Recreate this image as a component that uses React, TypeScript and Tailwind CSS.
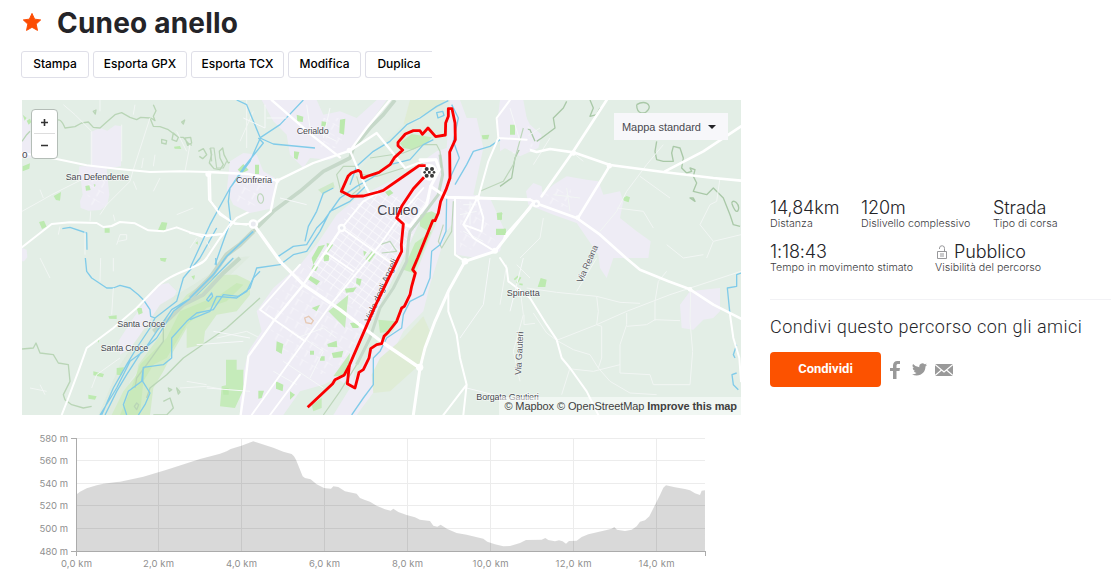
import type { ReactNode } from 'react';

const ACTIONS = [
  { label: 'Stampa', width: 'w-[68px]' },
  { label: 'Esporta GPX', width: 'w-[94px]' },
  { label: 'Esporta TCX', width: 'w-[93px]' },
  { label: 'Modifica', width: 'w-[73px]' },
];

const ELEVATIONS = [
  { label: '580 m', y: 13.5 },
  { label: '560 m', y: 35.5 },
  { label: '540 m', y: 58.5 },
  { label: '520 m', y: 80.5 },
  { label: '500 m', y: 103.5 },
  { label: '480 m', y: 126.5 },
];

const DISTANCES = [
  { label: '0,0 km', x: 56.5 },
  { label: '2,0 km', x: 138.5 },
  { label: '4,0 km', x: 221.5 },
  { label: '6,0 km', x: 304.5 },
  { label: '8,0 km', x: 387.5 },
  { label: '10,0 km', x: 470.5 },
  { label: '12,0 km', x: 553.5 },
  { label: '14,0 km', x: 636.5 },
];

const PROFILE =
  'M170 379V208L180 200 200 190 230 181 250 176 290 171 300 170 370 155 440 134 540 102 600 86 620 79 632 72 664 62 700 49 760 68 790 80 815 87 822 94 828 104 848 154 855 159 872 163 890 178 912 189 933 191 940 184 955 186 975 199 1010 206 1020 219 1035 225 1050 230 1070 242 1095 253 1112 257 1120 251 1135 261 1160 270 1185 277 1200 284 1230 288 1240 302 1252 305 1262 299 1282 312 1310 324 1340 329 1390 341 1402 350 1425 358 1450 364 1470 363 1500 354 1518 345 1565 344 1576 339 1585 345 1605 349 1617 346 1628 349 1638 356 1647 348 1670 347 1685 336 1705 328 1760 315 1775 311 1783 306 1791 314 1815 318 1835 314 1850 304 1860 290 1875 286 1888 274 1905 240 1920 210 1930 188 1938 181 1965 187 1995 192 2010 196 2025 205 2040 210 2045 197 2055 196V379Z';

function Countryside() {
  return (
    <>
      <rect x="0" y="0" width="2170" height="960" fill="#e3eee6" />

      {/* Built-up areas */}
      <g fill="#eeecf5">
        <path d="M212 102L240 90 262 98 285 82 305 85 303 205 260 212 268 290 262 320 242 336 205 338 182 330 180 310 188 290 183 250 175 235 178 205 212 205Z" />
        <path d="M6 50L30 70 34 180 6 180ZM6 450L20 455 22 478 12 490 6 490Z" />
        <path d="M1440 60L1465 20 1500 20 1530 80 1565 110 1555 150 1500 175 1455 150 1440 160ZM1518 280L1540 255 1565 265 1568 290 1600 260 1640 235 1700 245 1735 250 1750 290 1800 280 1810 310 1800 360 1850 400 1892 430 1885 480H1780L1760 540 1740 510 1735 470 1670 375 1600 350 1525 320Z" />
        <path d="M1980 620L2010 580 2050 575 2100 570 2100 640 2080 660 2050 665 2020 695 1985 690Z" />
        <path d="M390 590L420 560 445 555 470 580 450 620 410 660 370 700 330 750 300 770 295 730 340 660Z" />
      </g>
      <path d="M200 250L255 245 250 320 205 325ZM1440 60L1520 60 1540 150 1470 170ZM1560 280L1650 260 1660 330 1580 320Z" fill="url(#lanes)" opacity=".5" />

      {/* Woods and parks */}
      <path d="M640 480L690 475 600 560 520 600 440 700 400 760 330 850 290 951H235L300 800 420 620 520 560Z" fill="#dbeadb" opacity=".7" />
      <path d="M500 590L590 530 650 530 690 550 690 590 650 640 590 650 555 700 550 740 500 750 500 690 460 760 430 820 400 870 390 951H275L310 880 350 830 355 800 430 700 460 640Z" fill="#d3ebc9" />
      <path d="M600 590L650 555 670 560 620 610 560 630 500 680 440 780 400 800 370 850 360 951H300L330 880 360 800 440 720 480 640Z" fill="#c9e9ba" />
      <g fill="#bdeab0">
        <path d="M101 294L123 282 120 308 108 306ZM57 372L72 368 80 386 66 393ZM413 398L425 372 442 374 436 398ZM254 391H269V404H254ZM462 146L480 144 484 153 464 152ZM8 50L20 60 14 68ZM20 68L30 62 34 72 26 80ZM8 205L30 196 28 212 8 220ZM196 264L208 262 212 276 198 278ZM221 258L227 260 224 268ZM526 435L533 430 534 440Z" />
        <path d="M1470 80H1486L1484 111H1467ZM1440 392H1458V408L1440 413ZM1440 345L1448 346 1440 368ZM1809 300L1820 294 1830 298 1826 313 1812 308ZM1553 567L1562 540 1580 545 1576 567Z" />
        <path d="M220 820L252 828 248 838 220 832ZM290 810L312 808 305 832 290 830ZM350 630L365 630 368 645 356 650ZM265 655L290 652 290 663 268 662ZM205 890L230 895 225 905 205 902ZM420 480H440L436 492 422 488ZM514 535L525 532 522 546ZM230 724L238 726 236 734Z" />
      </g>
      <path d="M1483 545L1495 534M1490 556L1502 538M1498 558L1508 560" stroke="#bdeab0" strokeWidth="5" fill="none" />

      {/* Contours */}
      <g fill="none" stroke="#b9d5b6" strokeWidth="4" strokeLinejoin="round">
        <path d="M6 130L20 110 30 100M113 66C125 62 130 80 135 90L165 86 185 75 205 72 220 88 240 90 260 72 285 50 305 44 330 58 350 65 362 58 390 60 400 85 420 86 445 95 475 118 490 118 505 136 515 142M400 20L408 38 400 55 405 68 393 60M425 124L440 128 438 138 425 135ZM460 105L475 118 470 130 456 125ZM495 120L512 118 515 135 503 142ZM535 160L550 152 560 170 548 182 538 175M570 150L575 170 568 195 582 212 600 215 610 200 600 180 598 160 608 150 612 170 625 195 650 185M220 40L228 36 226 48ZM485 72L494 66 490 78Z" />
        <path d="M1640 10L1630 30 1600 60 1605 90 1565 120 1550 130M1545 130L1530 95 1510 92 1500 150 1485 180 1475 240 1440 265M1710 6L1720 30 1710 55 1730 50 1740 30M1850 20C1875 5 1895 20 1885 35S1850 50 1850 20M1910 130L1905 160 1910 185 1930 190 1960 190 1955 165 1960 145 1980 150 1990 180 1985 210 2000 225 2015 220 2010 210 2025 215 2020 235 2030 255 2020 280 2060 290 2080 270 2110 300 2130 350 2140 380 2160 385M2010 300L2025 310 2020 300ZM2135 315C2140 300 2160 320 2155 335S2140 330 2135 315" stroke="#a9c8a7" />
        <path d="M6 753L40 750 48 735 60 765 100 770 115 795 145 800 150 850 130 890 135 905 155 920 190 930 215 925M430 680L430 730 380 800 350 840 345 870M720 600L620 690 490 780 440 830 390 870 380 900M430 910L450 900 460 930 440 951 400 951M445 870L455 875 448 880ZM470 870L480 882 475 888ZM350 915L356 920 350 935 343 925Z" />
      </g>
      <path d="M660 480L610 525 550 590 490 620 450 660 400 700" fill="none" stroke="#c4d8c7" strokeWidth="12" />

      {/* Rivers and canals */}
      <g fill="none" stroke="#80cbe9" strokeWidth="4" strokeLinejoin="round">
        <path d="M590 390L540 480 490 540 470 610 405 660 390 690 350 750 320 800 280 870 245 951M587 480L590 510 540 580 460 640 410 720 365 760 320 830 290 880 255 951M640 480L590 530 530 590 455 635 410 700 370 760 330 790 290 870 240 951" />
        <path d="M127 392L150 388 200 405 201 455M196 480L200 520 215 540 260 570 280 570 300 562 330 570 355 590 370 605 390 635 392 655 405 660" />
        <path d="M720 520L700 540 680 580 655 595 610 590 580 635 530 645 500 670 455 720 455 780 430 800 370 808 365 850 325 880 310 920 320 951M370 808L368 850 390 885 375 920 355 951M560 605L575 585 578 595 565 610Z" />
        <path d="M2163 525L2150 530V565L2122 570 2130 650M2150 740L2140 770 2145 780M2150 825L2136 830 2140 860 2155 875" />
      </g>

      {/* Minor roads */}
      <g fill="none" stroke="#f2f6f4" strokeWidth="3" strokeLinejoin="round">
        <path d="M6 340L60 310 95 290 185 245M215 100V205M305 80V190M390 60L340 215 330 250 260 320 240 350M130 20L165 50 215 100M212 340L210 370M120 385L115 410M195 400V470M60 275L70 300M280 350L285 370M290 440L300 410 320 410V425L295 430M370 180L365 210M405 170L400 205M510 140L495 220M420 240L400 280M470 100L500 160M520 330L470 350M340 250L350 275M680 6V150M700 40L660 130M240 6V40M345 20L340 50M280 480V520M60 480L90 540M242 480L240 550M280 570L275 650M300 780L230 830 215 870M30 870L80 880M60 860L75 890M500 850L560 860M590 720L680 700 720 720M480 870L560 865 640 880M530 420L510 450M560 430L570 450" />
        <path d="M1460 20L1490 80 1530 90M1560 90L1500 130M1590 120L1540 200M1660 165L1690 190M1880 200L1820 280 1790 340 1740 400M1860 235L1950 300M1930 140L1880 200M1790 330L1870 340 1900 390M2100 240L2090 310 2070 320 2040 380 2080 430 2060 480M1940 440L1990 480 2050 470M2080 430L2163 410M1570 360L1560 420 1500 480M1600 290L1680 300M1640 270L1650 340" />
        <path d="M1520 570L1610 583 1730 595 1800 613 1860 616M1610 727L1730 680 1820 640 1950 590 2163 520M1730 595L1735 640 1730 680 1745 685V780L1735 810M1820 645L1820 680 1800 740V825L1890 830 1900 860H2010L2018 760 2010 670 2012 574M1820 685L1880 680 1905 665 1980 668M1905 668L1905 610 1915 550 1940 520M1610 727L1660 755 1710 770 1735 810 1770 850 1830 885 1910 890M1645 812L1720 820 1800 800M1512 650V680L1545 676M1500 570L1510 650 1480 760 1500 850M1540 645L1580 705 1610 727M1650 810L1625 890M1670 580L1730 480M1460 500L1440 620M1490 500L1530 540" />
      </g>

      {/* Main roads */}
      <g fill="none" stroke="#fff" strokeLinejoin="round" strokeLinecap="round" strokeWidth="6">
        <path d="M6 165L110 183 200 202 290 212 390 222 480 220 565 222M730 320L650 360 600 420 560 480M565 225L567 305 600 345 640 375 680 380M6 448L95 378 150 373 230 375 250 387 275 384 300 372 345 376 385 397 430 400 470 388 545 416 605 408" />
        <path d="M1530 305L1560 320 1670 360 1740 410 1818 480 1860 515 1945 550 2010 574 2080 620 2163 662M1440 120L1490 120 1510 150 1550 162 1590 153 1660 163 1770 201 1930 222 2080 240 2163 248" strokeWidth="8" />
        <path d="M1760 6L1660 160 1565 295M1768 205L1735 260 1675 358M1935 220L2050 160 2163 85M1530 330L1440 430" strokeWidth="8" />
        <path d="M1440 480L1460 510 1465 550 1530 600 1580 680 1610 725 1625 780 1650 810 1700 880 1735 951" />
        <path d="M560 480C545 510 450 520 405 573L350 630 280 690 200 750 175 820 145 900 125 951M2130 650L2140 720 2158 780 2163 850" />
      </g>
    </>
  );
}

function City() {
  return (
    <g transform="translate(510 0)">
      <g fill="#eeecf5">
        <path d="M215 6H380L400 50 450 40 500 60 560 6H590L480 155 420 185 360 180 340 210 300 170 290 110 250 70Z" />
        <path d="M120 190L160 165 200 170 220 220 255 240 250 330 180 345 130 320 110 280Z" />
        <path d="M640 230L740 160 770 150 780 6H810L830 60 860 60 880 150 850 290 900 300 945 400 930 460 860 480 800 470 785 380 770 400 745 480 720 560 700 640 640 700 600 780 560 870 500 951H150V870L175 760 215 700 200 640 250 570 330 500 380 440 440 350 500 300 560 270Z" />
        <path d="M930 6H1000L1010 60 1020 160 940 150 920 90Z" />
      </g>
      <path d="M480 330L560 285 640 300 720 300 640 470 540 650 440 590 350 500 420 440Z" fill="url(#blocks)" opacity=".75" />
      <path d="M220 640L340 510 540 650 470 790 400 830 280 790ZM810 310L870 310 920 440 810 460ZM130 240L230 240 200 330 140 310ZM400 60L470 60 450 150 380 150Z" fill="url(#lanes)" opacity=".5" />

      {/* Parks along the two rivers */}
      <path d="M660 6H765L740 60 700 90 640 80Z" fill="#dfecd5" />
      <path d="M640 80L760 20 770 110 720 130 660 185 550 225 500 230 560 150Z" fill="#e1eee3" />
      <path d="M700 655L640 720 570 780 545 830 550 885 600 880 700 790 720 700Z" fill="#dfecd6" />
      <path d="M690 370L745 360 700 470 660 570 610 700 540 760 490 850 500 760 560 640 640 480Z" fill="#dfeee1" />
      <path d="M400 860L440 840 480 870 430 951H280L330 880Z" fill="#e1eee4" />
      <g fill="#c5ebba">
        <path d="M630 135L665 108 725 118 715 132 670 155 640 150ZM690 350L725 340 745 350 735 370 715 400 690 385ZM675 435L725 400 690 480 670 525 640 515ZM415 640L475 590 465 690ZM430 835L480 765 475 825 465 835ZM565 665L615 670 600 700 570 705ZM365 920L395 900 395 930 370 940ZM108 785H140V815H160V875L135 930 90 925 95 865 108 862Z" />
      </g>
      <g fill="#bbe9ad">
        <path d="M585 282L600 275 610 285 595 295ZM385 445L405 440 370 500 365 480ZM410 435L430 440 412 465ZM400 472L418 468 416 488 402 490ZM355 530L390 550 380 562 352 542ZM370 500L384 506 378 520 364 514ZM465 572L500 568 490 582 468 584ZM545 460L556 468 538 492 526 484ZM500 540L515 544 510 564 498 556ZM520 458L530 462 522 475ZM480 675L510 672 505 690 488 690ZM412 738L440 728 442 748 414 746ZM425 765L460 758 455 778 430 780ZM390 775H404V788H390ZM360 758H372V770H360ZM365 630L390 620 380 640ZM260 730L280 738 275 768 258 758ZM258 850L280 860 278 880 258 872ZM300 880L315 890 300 905ZM205 878H222L215 900 205 902ZM98 870H116V890H100Z" />
        <path d="M395 70L410 72 406 86 394 84ZM450 65L466 62 462 110 448 105ZM312 160L328 162 322 185 312 180ZM320 50L340 56 338 72 322 70ZM960 80H975V110H960ZM920 345L936 343V365L922 366ZM918 392H946V411H918ZM875 112L898 110 894 124 878 124ZM143 215L160 198 176 216 155 226ZM195 200H207V228H195Z" />
      </g>
      <path d="M384 275L430 252 434 268 400 290Z" fill="#cfe9ca" />
      <path d="M344 660L356 655 370 668 364 677 348 674Z" fill="none" stroke="#e6c9b4" strokeWidth="4" />

      <g fill="none" stroke="#c6d8c9" strokeLinejoin="round">
        <path d="M615 6L580 50 540 90 490 150 480 180 400 220 330 280 250 340 190 400" strokeWidth="11" />
        <path d="M190 400L150 440 110 470 60 540 0 600" strokeWidth="14" />
        <path d="M750 170L758 230 745 290 700 350 660 400 655 430 650 490 610 570 570 630 540 720 500 800" strokeWidth="9" />
      </g>
      <g fill="none" stroke="#bdd6bb" strokeWidth="3.5" strokeLinejoin="round">
        <path d="M455 290L440 230 460 205 500 205 520 240M480 295L510 270 500 235M515 230L560 235 640 210 700 195M540 180L640 165 700 140 740 140 750 160 755 210M790 310L785 400 755 450 745 430 760 380M870 280L940 250 970 200 1000 90M205 290C215 280 225 300 218 312S198 305 205 290M65 190L62 150 72 150 80 210 100 210 110 190M500 800L450 880 400 951M570 440L600 430 620 460 575 465" />
      </g>

      <g fill="none" stroke="#80cbe9" strokeWidth="4" strokeLinejoin="round">
        <path d="M340 6L270 80 212 118 180 190 120 270 60 380 0 510M205 120L220 135 160 210 120 270 115 310 122 370 100 430 75 500M210 120L250 138 375 150M140 6L170 20 210 118" />
        <path d="M775 8L740 25 690 60 650 80 600 130 550 160 500 205 480 260M730 125L700 140 660 185 600 200 545 240 500 265 450 300 400 370 380 390 350 440 310 445 265 475M430 270L400 285 380 340 355 385 345 430M530 262L480 310 420 340 390 400 350 460 310 470 270 500 200 510 180 570 140 600 80 595 60 640 0 665" />
        <path d="M785 20L805 60 790 130 808 180 780 240M930 125L900 145 850 160 830 200 795 260M770 300L768 400 750 440 725 460 720 540 700 590 660 610 640 650 635 690 590 720 570 760 550 780 550 860 520 900 485 951M740 44L758 40 762 52 744 60Z" />
        <path d="M190 400L110 475 70 530 0 600" strokeWidth="5" />
      </g>

      <g fill="none" stroke="#f6f8f9" strokeWidth="3" strokeLinejoin="round">
        <path d="M230 60H290M225 20V90L160 60M350 20L360 90 440 130M420 30L400 120M270 300L350 320M960 30L990 130M820 320H860M810 350L860 340M820 400L880 430M840 310V380M900 480L880 620 810 720M1000 480L960 640M830 870L910 890M340 720L400 760 360 840M280 790L400 870M440 720L400 690 320 720M250 820L320 860M50 870L180 880M20 740L160 730M70 700L180 720" />
      </g>

      <g fill="none" stroke="#fff" strokeLinejoin="round" strokeLinecap="round" strokeWidth="5.500">
        <path d="M245 6L370 115 450 178M600 6L530 90 480 158 370 195 262 248 175 228 55 222M262 248L250 300 242 340 205 370M480 158L515 240 540 290M480 158L560 105 645 210M645 210L700 190 738 185" strokeWidth="7" />
        <path d="M190 378L270 490 340 560 450 635 580 735 690 810" strokeWidth="10" />
        <path d="M1030 315L915 460 825 490 775 580 735 670 705 750 690 810 670 951" strokeWidth="9" />
        <path d="M690 185H738L748 215 722 265 710 320 660 385 640 378" strokeWidth="9" />
        <path d="M722 265L770 298 860 300 1020 305" strokeWidth="9" />
        <path d="M455 390L340 560 250 670 175 775 165 860 152 951" strokeWidth="7" />
        <path d="M455 390L520 310 580 275M455 390L610 500M410 465L490 520M345 730L210 635 330 500M185 951L300 790 430 610 570 440 640 340 700 270M240 951L330 830" />
        <path d="M795 300V470L825 490M862 300L880 360 875 400 820 380 862 300M820 380L850 420 915 460M865 298L895 190 925 120 920 60 960 6M925 120L1010 125M775 580V640L800 710 810 780 830 860 760 951M830 860L820 951" strokeWidth="6" />
        <path d="M0 405L50 412 100 408 122 375M60 228L62 310 90 350 135 378H190" />
      </g>
      <g fill="#e9eaf0" stroke="#fff" strokeWidth="7">
        <circle cx="190" cy="378" r="11" />
        <circle cx="455" cy="390" r="9" />
      </g>
    </g>
  );
}

function MapCanvas() {
  return (
    <svg viewBox="6 6 2157 945" className="block h-[315px] w-[719px]">
      <defs>
        <pattern id="blocks" width="26" height="20" patternUnits="userSpaceOnUse" patternTransform="rotate(36)">
          <path d="M0 0H26M0 0V20" stroke="#fff" strokeWidth="4" />
        </pattern>
        <pattern id="lanes" width="34" height="30" patternUnits="userSpaceOnUse" patternTransform="rotate(30)">
          <path d="M0 0H24M6 0V20" stroke="#fff" strokeWidth="3" fill="none" />
        </pattern>
      </defs>

      <Countryside />
      <City />

      {/* Junctions */}
      <circle cx="1549" cy="317" r="8" fill="#e9eaf0" stroke="#fff" strokeWidth="7" />
      <g fill="#fff">
        <circle cx="565" cy="228" r="9" />
        <circle cx="1660" cy="165" r="8" />
        <circle cx="1768" cy="203" r="8" />
        <circle cx="1673" cy="359" r="7" />
        <circle cx="1199" cy="808" r="11" />
        <circle cx="1335" cy="490" r="10" />
        <circle cx="988" cy="157" r="8" />
        <circle cx="1425" cy="458" r="9" />
        <circle cx="1372" cy="300" r="8" />
        <circle cx="2010" cy="574" r="7" />
        <circle cx="772" cy="248" r="7" />
        <circle cx="1228" cy="223" r="25" />
      </g>

      {/* Place names */}
      <g
        fill="#484850"
        stroke="#fff"
        strokeOpacity=".6"
        strokeWidth="4"
        paintOrder="stroke"
        fontFamily='"Liberation Sans", Arial, sans-serif'
        fontSize="27"
      >
        <text x="137" y="247" textLength="190">San Defendente</text>
        <text x="648" y="255" textLength="108">Confreria</text>
        <text x="830" y="107" textLength="96">Cerialdo</text>
        <text x="1072" y="352" fontSize="42" textLength="123">Cuneo</text>
        <text x="292" y="686" textLength="144">Santa Croce</text>
        <text x="242" y="759" textLength="143">Santa Croce</text>
        <text x="1460" y="594" textLength="99">Spinetta</text>
        <text x="1369" y="906" textLength="187">Borgata Gautieri</text>
        <text x="6" y="180" fontSize="30">o</text>
        <g fill="#606068">
          <text transform="translate(1503 831) rotate(-87)" textLength="130">Via Gauteri</text>
          <text transform="translate(1686 556) rotate(-66)" textLength="120">Via Reana</text>
          <text transform="translate(1049 674) rotate(-66)" textLength="204">Viale degli Angeli</text>
        </g>
      </g>

      {/* Recorded route */}
      <g fill="none" stroke="#fa0000" strokeWidth="8.5" strokeLinejoin="round">
        <path d="M1217 203L1197 203 1165 225 1090 277 1075 282 1030 294 993 295 964 280 984 235 994 225 1015 217 1022 222 1025 238 1031 240 1044 234 1077 223 1110 200 1124 178 1148 156 1134 143 1134 133 1156 108 1180 98 1200 98 1207 109 1224 90 1247 116 1276 111 1277 75 1285 55 1285 32 1296 32 1305 75 1306 125 1289 162 1290 240 1278 275 1262 310 1255 345 1245 368 1238 368 1193 480 1178 515 1186 525 1175 565 1170 590 1153 625 1145 630 1130 670 1105 702 1092 715 1085 737 1070 740 1052 752 1047 780 1030 815 1017 823 1005 870 982 857 988 802" />
        <path d="M1212 238L1180 272 1145 325 1130 360 1150 378 1144 440 1145 460 1135 480 1065 625 988 802 972 832 945 845 938 857 863 928" />
      </g>

      {/* Finish marker */}
      <circle cx="1228" cy="223" r="19" fill="#fff" />
      <g fill="#3b3b3b">
        <circle cx="1220" cy="213" r="6" />
        <circle cx="1236" cy="213" r="6" />
        <circle cx="1220" cy="233" r="6" />
        <circle cx="1236" cy="233" r="6" />
        <circle cx="1214" cy="223" r="4" />
        <circle cx="1242" cy="223" r="4" />
        <rect x="1224" y="219" width="8" height="8" />
      </g>
    </svg>
  );
}

function RouteMap() {
  return (
    <div className="relative h-[315px] w-[719px] overflow-hidden">
      <MapCanvas />

      <div className="absolute top-[9px] left-[9px] h-[50px] w-[27px] rounded-[4px] border border-[#b4bdb7] bg-white">
        <svg viewBox="0 0 25 48" className="h-12 w-[25px]">
          <path d="M2 23.5H23" stroke="#ddd" />
          <path d="M9 12.5H16M12.5 9V16M9 35.5H16" stroke="#333" strokeWidth="1.6" />
        </svg>
      </div>

      <div className="absolute top-[13px] right-[13px] flex h-[27px] w-[114px] items-center bg-[#f7f7fa] pt-px pl-[8px] font-['Liberation_Sans',Arial,sans-serif] text-[11px] tracking-[-0.04px] text-[#494950]">
        Mappa standard
        <span className="ml-[7px] border-x-4 border-t-4 border-x-transparent border-t-[#242428]" />
      </div>

      <div className="absolute right-0 bottom-0 h-[18px] bg-white/50 pr-[4px] pl-[5px] font-['Liberation_Sans',Arial,sans-serif] text-[11px] leading-[18px] tracking-[-0.09px] whitespace-nowrap text-[#404040]">
        © Mapbox © OpenStreetMap <b>Improve this map</b>
      </div>
    </div>
  );
}

function ElevationChart() {
  return (
    <svg viewBox="0 0 700 150" className="-ml-0.5 block h-[150px] w-[700px]">
      <g stroke="#ececec" shapeRendering="crispEdges">
        {ELEVATIONS.map((tick) => (
          <path key={tick.label} d={`M56 ${tick.y}H685`} />
        ))}
        {DISTANCES.map((tick) => (
          <path key={tick.label} d={`M${tick.x} 13V126`} />
        ))}
      </g>
      <path d={PROFILE} transform="scale(.33333)" fill="#000" fillOpacity=".15" />
      <path d="M51 13.5H56.5V131M51 126.5H685.5V131" fill="none" stroke="#ababab" shapeRendering="crispEdges" />
      <g fill="#8f8f8f" fontSize="9.5" fontFamily="Inter, sans-serif">
        {ELEVATIONS.map((tick) => (
          <text key={tick.label} x="48" y={tick.y + 3.5} textAnchor="end" textLength="28.5">
            {tick.label}
          </text>
        ))}
        {DISTANCES.map((tick) => (
          <text
            key={tick.label}
            x={tick.x}
            y="142"
            textAnchor="middle"
            textLength={tick.label.length > 6 ? 36 : 31}
          >
            {tick.label}
          </text>
        ))}
      </g>
    </svg>
  );
}

function Stat({ value, label, className }: { value: ReactNode; label: string; className?: string }) {
  return (
    <div className={className}>
      <div className="flex h-[22px] items-center text-[18px] leading-[22px] font-light tracking-[-0.1px] whitespace-nowrap text-[#242428]">
        {value}
      </div>
      <div className="h-[10px] text-[10.7px] leading-[10px] font-light whitespace-nowrap text-[#3c3c42]">{label}</div>
    </div>
  );
}

function LockIcon() {
  return (
    <svg viewBox="0 0 10 14" className="mr-[7px] ml-[2px] h-[14px] w-[10px]" fill="none" stroke="#8c8c90" strokeWidth=".9">
      <path d="M.5 6.5H9.5V13.5H.5ZM7.5 6.5V3.5A2.5 2.5 0 0 0 2.5 3V4M3 9H7M3 11H7" />
    </svg>
  );
}

export default function App() {
  return (
    <div className="h-[583px] w-[1111px] overflow-hidden bg-white font-[Inter,sans-serif]">
      <header className="flex h-[46px] items-center pl-[21px]">
        <svg viewBox="0 0 24 24" className="mt-[-3px] h-[22px] w-[22px]" fill="#fc4c02" stroke="#fc4c02" strokeLinejoin="round">
          <path d="M12 2.6L14.9 8.9 21.5 9.7 16.6 14.3 18 21.2 12 17.8 6 21.2 7.4 14.3 2.5 9.7 9.1 8.9Z" />
        </svg>
        <h1 className="-mt-px ml-[14px] text-[28px] leading-none font-bold tracking-[0.2px] text-[#242428]">Cuneo anello</h1>
      </header>

      <div className="mt-[5px] flex h-[27px] gap-1 pl-[21px] text-[12px] font-medium text-black">
        {ACTIONS.map(({ label, width }) => (
          <button key={label} className={`${width} rounded-[3px] border border-[#dfdfe8] pb-0.5 whitespace-nowrap`}>
            {label}
          </button>
        ))}
        <button className="w-[67px] rounded-l-[3px] border border-r-0 border-[#dfdfe8] pb-0.5">Duplica</button>
      </div>

      <main className="mt-[22px] flex pl-[22px]">
        <div className="w-[719px]">
          <RouteMap />
          <div className="mt-[10px]">
            <ElevationChart />
          </div>
        </div>

        <aside className="ml-[29px] flex-1 pt-[97px]">
          <div className="flex">
            <Stat value="14,84km" label="Distanza" className="w-[91px]" />
            <Stat value="120m" label="Dislivello complessivo" className="w-[132px]" />
            <Stat value="Strada" label="Tipo di corsa" />
          </div>
          <div className="mt-[12px] flex">
            <Stat value="1:18:43" label="Tempo in movimento stimato" className="w-[165px]" />
            <Stat
              value={
                <>
                  <LockIcon />
                  Pubblico
                </>
              }
              label="Visibilità del percorso"
            />
          </div>

          <div className="mt-[26px] border-t border-[#f2f2f5] pt-[16px]">
            <h2 className="font-[Roboto,sans-serif] text-[18px] leading-[22px] font-light tracking-[0.48px] whitespace-nowrap text-[#242428]">
              Condivi questo percorso con gli amici
            </h2>
            <div className="mt-[14px] flex items-center">
              <button className="h-[35px] w-[111px] rounded-[4px] bg-[#fc5200] pb-0.5 font-[Roboto,sans-serif] text-[13px] font-bold text-white">
                Condividi
              </button>
              <svg viewBox="0 0 10 18" className="ml-[9px] h-[18px] w-[10px]" fill="#999">
                <path d="M3 18V10H0V7H3V4.6C3 1.7 4.7 0 7.3 0H10V3H8.2C7 3 6.500 3.600 6.500 4.700V7H10L9.500 10H6.500V18Z" />
              </svg>
              <svg viewBox="0 0 24 20" className="mt-[-1px] ml-[12px] h-[13px] w-[15px]" fill="#999">
                <path d="M24 2.400a9.800 9.800 0 0 1-2.800.8A4.900 4.900 0 0 0 23.300.5a9.900 9.900 0 0 1-3.100 1.200A4.900 4.900 0 0 0 11.800 6.200 14 14 0 0 1 1.700 1a4.900 4.900 0 0 0 1.500 6.600A4.900 4.900 0 0 1 1 7v.1a4.900 4.900 0 0 0 3.900 4.800 5 5 0 0 1-2.200.1 4.900 4.900 0 0 0 4.600 3.400A9.900 9.900 0 0 1 0 17.500 13.900 13.900 0 0 0 7.500 19.700c9.100 0 14.300-7.700 14-14.600A10 10 0 0 0 24 2.400Z" />
              </svg>
              <svg viewBox="0 0 18 12" className="ml-[8px] h-[12px] w-[18px]">
                <path d="M0 0H18V12H0Z" fill="#999" />
                <path d="M0 .5L9 8 18 .5M0 11.500L6.500 6M18 11.500L11.500 6" fill="none" stroke="#fff" strokeWidth="1.200" />
              </svg>
            </div>
          </div>
        </aside>
      </main>
    </div>
  );
}
